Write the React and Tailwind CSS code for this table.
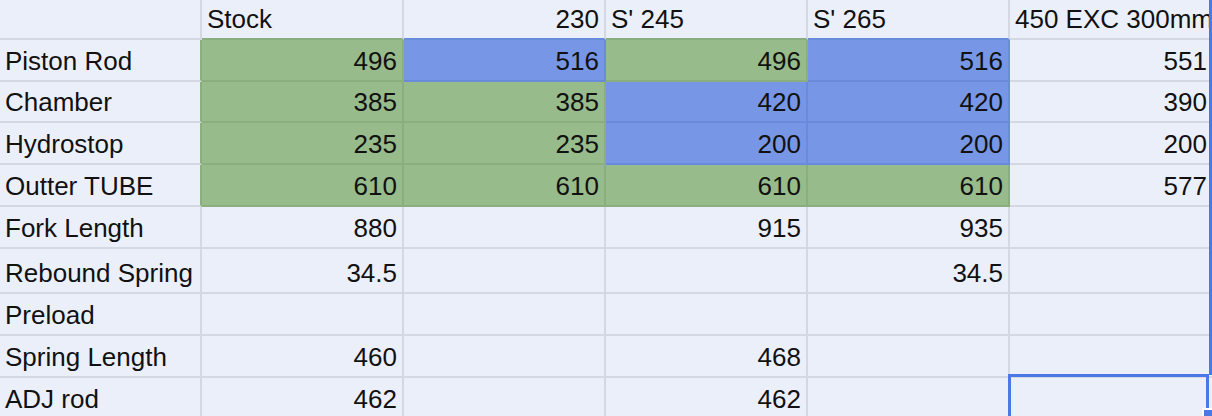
import React from "react";

const G = "g";
const B = "b";

const header = ["", "Stock", "230", "S' 245", "S' 265", "450 EXC 300mm"];
const headerAlign = ["l", "l", "r", "l", "l", "l"];

// label, values, fills, row height
const rows = [
  ["Piston Rod", ["496", "516", "496", "516", "551"], [G, B, G, B, null], "h-[42px]"],
  ["Chamber", ["385", "385", "420", "420", "390"], [G, G, B, B, null], "h-[41px]"],
  ["Hydrostop", ["235", "235", "200", "200", "200"], [G, G, B, B, null], "h-[42px]"],
  ["Outter TUBE", ["610", "610", "610", "610", "577"], [G, G, G, G, null], "h-[42px]"],
  ["Fork Length", ["880", "", "915", "935", ""], [], "h-[42px]"],
  ["Rebound Spring", ["34.5", "", "", "34.5", ""], [], "h-[45px]"],
  ["Preload", ["", "", "", "", ""], [], "h-[42px]"],
  ["Spring Length", ["460", "", "468", "", ""], [], "h-[42px]"],
  ["ADJ rod", ["462", "", "462", "", ""], [], "h-[42px]"],
];

const fillCls = {
  g: "bg-[#97bb8a] border-[#8aae7e]",
  b: "bg-[#7797e6] border-[#6a8bdc]",
};

function Cell({ children, align = "r", fill, last, bottomColor, rightColor, h }) {
  const base = fill ? fillCls[fill] : "bg-[#ebeffa] border-[#d3d8e3]";
  return (
    <div
      className={`${h} flex items-end px-[5px] pb-[6px] border-b-2 ${last ? "" : "border-r-2"} ${base} ${bottomColor || ""} ${rightColor || ""} ${
        align === "r" ? "justify-end" : "justify-start"
      } whitespace-nowrap`}
    >
      <span className="leading-[26px]">{children}</span>
    </div>
  );
}

export default function App() {
  const colBelow = rows[0][2];
  return (
    <div className="relative w-[1212px] h-[416px] overflow-hidden bg-[#ebeffa] text-[26px] text-[#111] font-['Liberation_Sans',Arial,sans-serif]">
      <div className="grid grid-cols-[202px_202px_202px_202px_202px_202px]">
        {header.map((h, i) => {
          const f = i > 0 ? colBelow[i - 1] : null;
          const bc = f === G ? "!border-b-[#8aae7e]" : f === B ? "!border-b-[#6a8bdc]" : "";
          return (
            <Cell key={i} align={headerAlign[i]} last={i === 5} h="h-[40px]" bottomColor={bc}>
              {h}
            </Cell>
          );
        })}
        {rows.map(([label, vals, fills, h], r) => (
          <React.Fragment key={r}>
            <Cell
              align="l"
              h={h}
              rightColor={fills[0] === G ? "!border-r-[#8aae7e]" : ""}
            >
              {label}
            </Cell>
            {vals.map((v, c) => (
              <Cell key={c} fill={fills[c]} last={c === 4} h={h}>
                {v}
              </Cell>
            ))}
          </React.Fragment>
        ))}
      </div>

      {/* column edge highlight */}
      <div className="absolute right-0 top-0 w-[3px] h-[375px] bg-[#4a78e4]" />
      {/* selected cell */}
      <div className="absolute left-[1008px] top-[374px] w-[201px] h-[60px] border-[3px] border-[#4a78e4]" />
      {/* fill handle */}
      <div className="absolute left-[1202px] top-[408px] w-[12px] h-[12px] bg-[#4a78e4] border-2 border-white" />
    </div>
  );
}
